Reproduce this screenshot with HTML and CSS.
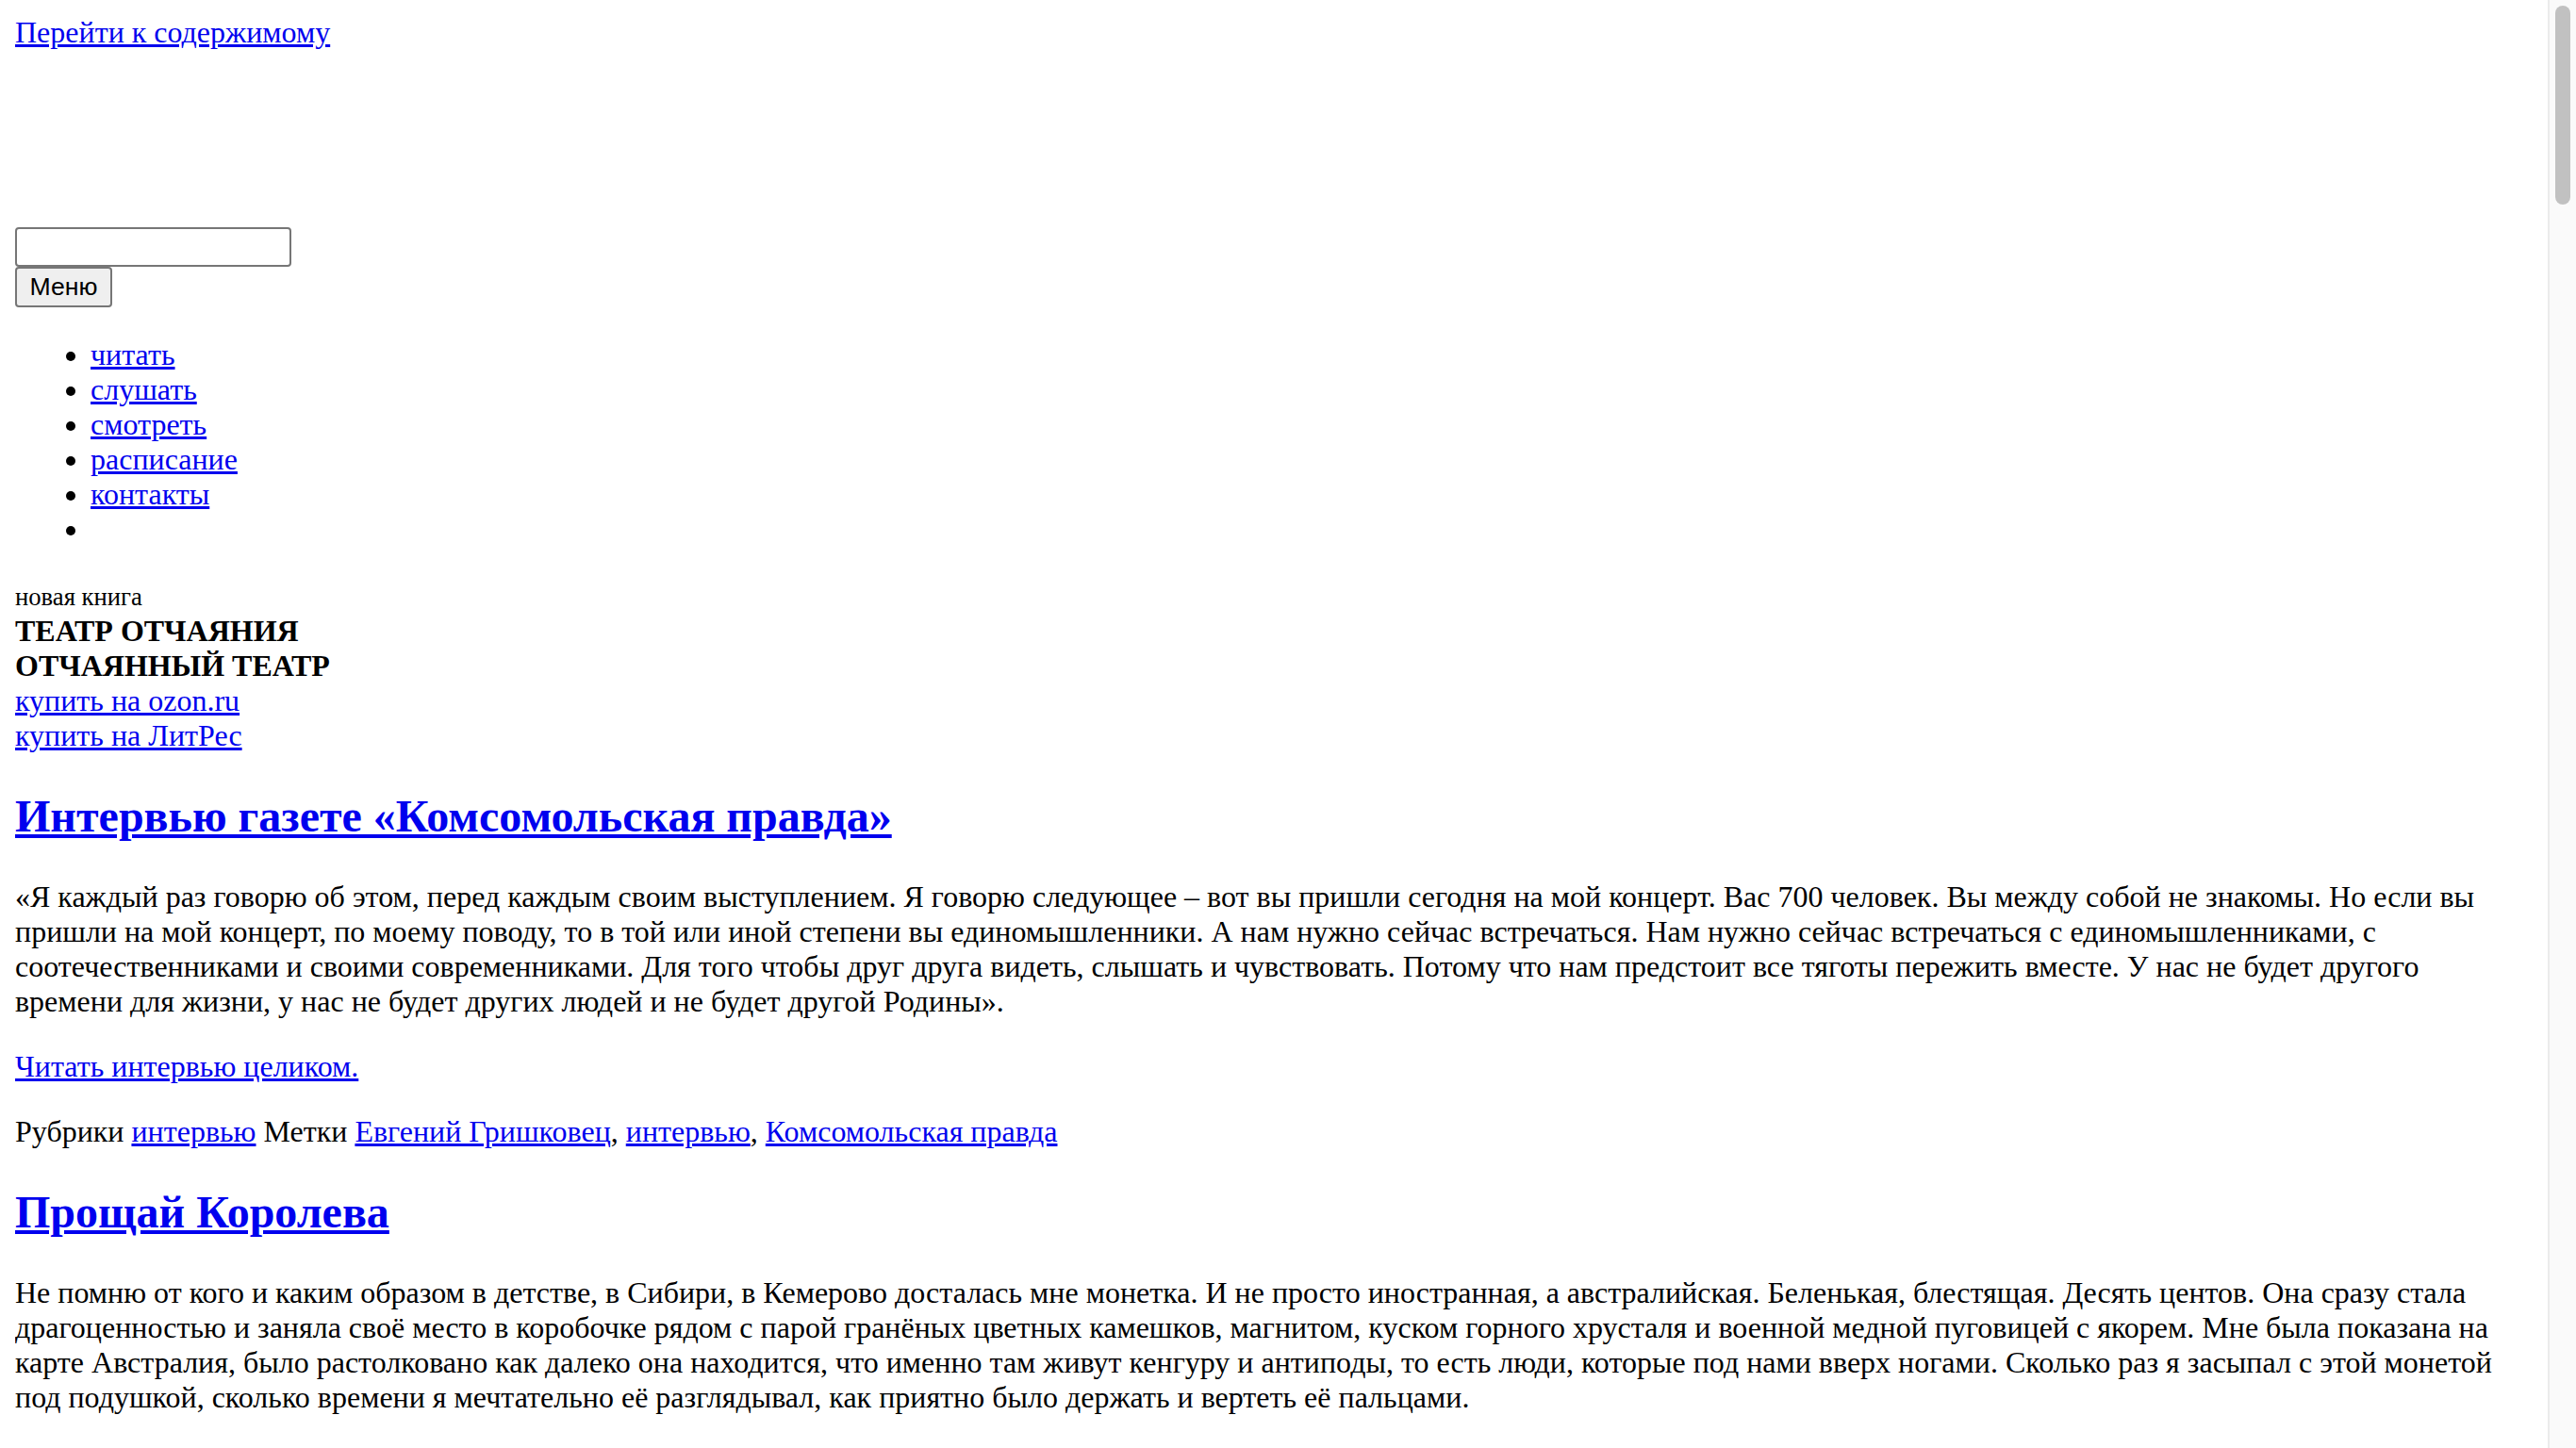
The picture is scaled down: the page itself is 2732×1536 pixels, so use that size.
FILE: index.html
```html
<!DOCTYPE html>
<html lang="ru">
<head>
<meta charset="utf-8">
<title>Евгений Гришковец</title>
<link rel="stylesheet" href="styles.css">
</head>
<body>
<div class="page">
  <a class="skip-link" href="#content">Перейти к содержимому</a>
  <header class="site-header">
    <form class="search-form">
      <input class="search-field" type="text">
    </form>
    <button class="menu-toggle" type="button">Меню</button>
    <ul class="main-menu">
      <li><a href="#">читать</a></li>
      <li><a href="#">слушать</a></li>
      <li><a href="#">смотреть</a></li>
      <li><a href="#">расписание</a></li>
      <li><a href="#">контакты</a></li>
      <li class="menu-empty"></li>
    </ul>
  </header>
  <div class="promo">
    <div class="promo-line promo-first"><span class="promo-label">новая книга</span></div>
    <div class="promo-line promo-title">ТЕАТР ОТЧАЯНИЯ</div>
    <div class="promo-line promo-title">ОТЧАЯННЫЙ ТЕАТР</div>
    <div class="promo-line"><a href="#">купить на ozon.ru</a></div>
    <div class="promo-line"><a href="#">купить на ЛитРес</a></div>
  </div>
  <main id="content" class="site-main">
    <article class="post">
      <h2 class="entry-title"><a href="#">Интервью газете «Комсомольская правда»</a></h2>
      <p>«Я каждый раз говорю об этом, перед каждым своим выступлением. Я говорю следующее – вот вы пришли сегодня на мой концерт. Вас 700 человек. Вы между собой не знакомы. Но если вы пришли на мой концерт, по моему поводу, то в той или иной степени вы единомышленники. А нам нужно сейчас встречаться. Нам нужно сейчас встречаться с единомышленниками, с соотечественниками и своими современниками. Для того чтобы друг друга видеть, слышать и чувствовать. Потому что нам предстоит все тяготы пережить вместе. У нас не будет другого времени для жизни, у нас не будет других людей и не будет другой Родины».</p>
      <p><a href="#">Читать интервью целиком.</a></p>
      <footer class="entry-footer">Рубрики <a href="#">интервью</a> Метки <a href="#">Евгений Гришковец</a>, <a href="#">интервью</a>, <a href="#">Комсомольская правда</a></footer>
    </article>
    <article class="post">
      <h2 class="entry-title"><a href="#">Прощай Королева</a></h2>
      <p>Не помню от кого и каким образом в детстве, в Сибири, в Кемерово досталась мне монетка. И не просто иностранная, а австралийская. Беленькая, блестящая. Десять центов. Она сразу стала драгоценностью и заняла своё место в коробочке рядом с парой гранёных цветных камешков, магнитом, куском горного хрусталя и военной медной пуговицей с якорем. Мне была показана на карте Австралия, было растолковано как далеко она находится, что именно там живут кенгуру и антиподы, то есть люди, которые под нами вверх ногами. Сколько раз я засыпал с этой монетой под подушкой, сколько времени я мечтательно её разглядывал, как приятно было держать и вертеть её пальцами.</p>
    </article>
  </main>
</div>
<div class="scrollbar" aria-hidden="true"><div class="scrollbar-thumb"></div></div>
</body>
</html>
```

FILE: styles.css
```css
html {
  background: #ffffff;
}

body {
  margin: 16px;
  font-family: "Liberation Serif", "Times New Roman", serif;
  font-size: 32px;
  color: #000000;
}

.page {
  max-width: 2670px;
}

a {
  color: #0000ee;
}

.skip-link {
  display: inline-block;
}

.search-form {
  margin: 188px 0 0 0;
}

.search-field {
  display: block;
  box-sizing: border-box;
  width: 293px;
  height: 42px;
  margin: 0;
  padding: 2px 4px;
  border: 2px solid #767676;
  border-radius: 4px;
  background: #ffffff;
  font-family: "Liberation Sans", Arial, sans-serif;
  font-size: 26.67px;
}

.menu-toggle {
  display: block;
  box-sizing: border-box;
  width: 103px;
  height: 43px;
  margin: 0;
  padding: 2px 12px;
  border: 2px solid #767676;
  border-radius: 4px;
  background: #efefef;
  color: #000000;
  font-family: "Liberation Sans", Arial, sans-serif;
  font-size: 26.67px;
  line-height: 1;
}

.main-menu {
  margin: 32px 0;
  padding-left: 80px;
  list-style: disc;
}

.main-menu li {
  line-height: 37px;
}

.menu-empty {
  height: 37px;
}

.promo {
  padding-top: 1.5px;
}

.promo-line {
  line-height: 37px;
}

.promo-first {
  line-height: 35px;
}

.promo-label {
  font-size: 26.67px;
}

.promo-title {
  font-weight: bold;
}

.entry-title {
  font-size: 48px;
  font-weight: bold;
  margin: 39px 0 40px;
  line-height: 55px;
}

.post p {
  margin: 32px 0;
  line-height: 37px;
}

.entry-footer {
  line-height: 37px;
}

/* window scrollbar drawn over the page edge */
.scrollbar {
  position: fixed;
  top: 0;
  right: 0;
  bottom: 0;
  width: 28px;
  background: #fafafa;
  border-left: 2px solid #ebebeb;
}

.scrollbar-thumb {
  margin: 6px 6px 0 6px;
  height: 211px;
  border-radius: 8px;
  background: #c1c1c1;
}
```
